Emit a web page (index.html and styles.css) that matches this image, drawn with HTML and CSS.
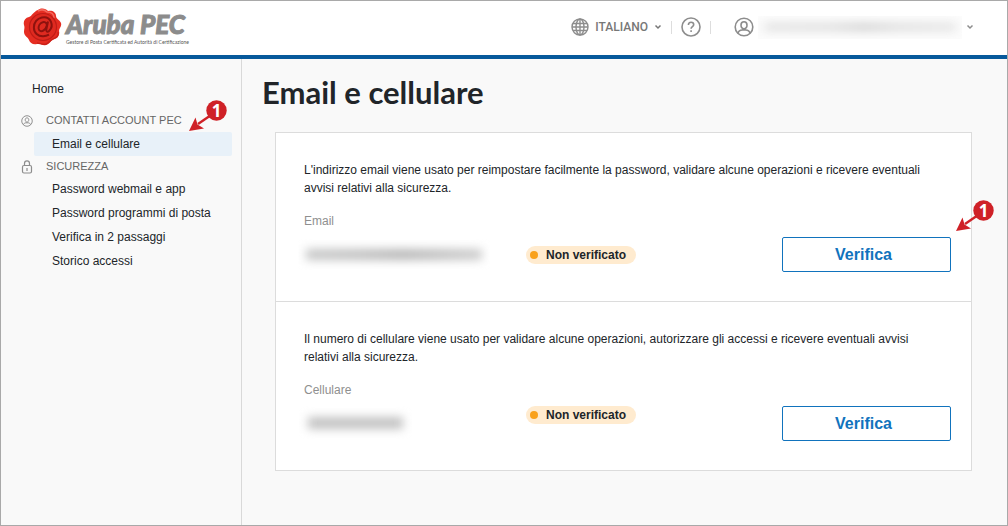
FILE: index.html
```html
<!DOCTYPE html>
<html lang="it">
<head>
<meta charset="utf-8">
<meta name="viewport" content="width=device-width, initial-scale=1">
<title>Aruba PEC - Email e cellulare</title>
<link rel="stylesheet" href="styles.css">
</head>
<body>
<svg class="defs" aria-hidden="true">
  <symbol id="chevron" viewBox="0 0 8 8"><path d="M1.500 2.500 4 5l2.500-2.500" fill="none" stroke="currentColor" stroke-width="1.500"/></symbol>
  <symbol id="user" viewBox="0 0 20 20"><g fill="none" stroke="currentColor" stroke-width="1.600"><circle cx="10" cy="10" r="8.800"/><path d="M10 4.800c1.900 0 3 1.400 3 3.300S11.800 11.700 10 11.700 7 10 7 8.100s1.100-3.300 3-3.300ZM4 16.300c.5-2.300 2.400-3.300 4.300-3.300h3.400c1.900 0 3.800 1 4.300 3.300"/></g></symbol>
  <symbol id="arrow" viewBox="0 0 38 32">
    <path d="M25 13 9 24" stroke="#cf2127" stroke-width="2.400" fill="none"/>
    <path d="M0 31 6.500 17.500l2 7 6.500 4Z" fill="#cf2127"/>
    <circle cx="27.500" cy="10.500" r="10.200" fill="#cf2127"/>
  </symbol>
</svg>
<div class="page">
  <header class="topbar">
    <a class="logo" href="#">
      <svg class="seal" viewBox="0 0 40 38" aria-hidden="true">
        <path d="M15 2c4-3 8-1 10 1 4-1 8 1 8 5 0 3 4 4 5 7 1 4-2 5-2 8 1 4-1 7-5 8-3 1-4 5-8 6-4 1-5-2-9-1-4 1-7-1-8-4-1-3-5-4-5-8 0-3 1-4 0-7-1-4 1-7 5-8C9 8 11 3 15 2Z" fill="#e52d22"/>
        <path d="M15 3c4-2 7-1 9 1 5 0 7 2 7 6" fill="none" stroke="#f4685c" stroke-width="1.500"/>
        <path d="M35 24c1 4-2 6-5 7-3 1-4 4-7 5-4 1-6-1-9-1" fill="none" stroke="#cb2119" stroke-width="1.500"/>
        <circle cx="20" cy="19" r="13.500" fill="#df2a20" stroke="#c01c16" stroke-width="1.200"/>
        <path d="M25 13.500 23.300 21.500c-.4 2.300 1.200 2.900 2.800 1.400 2.500-2.200 3.200-6 1.800-9.200-1.600-3.500-5.300-5-9.100-4.200-4.600 1-7.900 5-7.900 9.900 0 5.400 4 9 9.300 8.800 2.200 0 4-.6 5.800-1.600M24 17c-.5-2.300-2.200-3.400-4.300-2.700-3 .9-4.500 3.800-4 6.600.5 2.400 2.900 3 4.900 1.500 1.900-1.400 2.900-3.200 3.400-5.400Z" fill="none" stroke="#8e120e" stroke-width="2"/>
      </svg>
      <span class="brand"><span class="brand-name">Aruba PEC</span><span class="brand-tag">Gestore di Posta Certificata ed Autorità di Certificazione</span></span>
    </a>
    <nav class="tools" aria-label="Strumenti">
      <button class="tool lang" type="button">
        <svg class="globe" viewBox="0 0 18 18" aria-hidden="true"><g fill="none" stroke="currentColor" stroke-width="1.400"><circle cx="9" cy="9" r="8"/><ellipse cx="9" cy="9" rx="4" ry="8"/><path d="M9 1v16M2 5.500h14M1 9h16M2 12.500h14"/></g></svg>
        <span>ITALIANO</span>
        <svg class="chevron" aria-hidden="true"><use href="#chevron"/></svg>
      </button>
      <span class="rule"></span>
      <button class="tool" type="button" aria-label="Aiuto">
        <svg class="help" viewBox="0 0 20 20" aria-hidden="true"><g fill="none" stroke="currentColor" stroke-width="1.600"><circle cx="10" cy="10" r="9"/><path d="M7.400 8c0-1.700 1.100-2.700 2.700-2.700s2.600 1 2.600 2.400c0 1.900-2.600 2-2.600 4.100"/><path d="M10.100 13.200v1.700"/></g></svg>
      </button>
      <span class="rule"></span>
      <button class="tool account" type="button" aria-label="Account">
        <svg class="avatar" aria-hidden="true"><use href="#user"/></svg>
        <span class="veil veil-account"><span class="smudge"></span></span>
        <svg class="chevron" aria-hidden="true"><use href="#chevron"/></svg>
      </button>
    </nav>
  </header>
  <div class="body">
    <aside class="sidebar">
      <a class="home" href="#">Home</a>
      <section class="group">
        <h2 class="group-title"><svg class="group-icon" aria-hidden="true"><use href="#user"/></svg>CONTATTI ACCOUNT PEC</h2>
        <a class="item active" href="#" aria-current="page">Email e cellulare</a>
      </section>
      <section class="group">
        <h2 class="group-title"><svg class="group-icon" viewBox="0 0 12 14" aria-hidden="true"><g fill="none" stroke="currentColor" stroke-width="1.200"><rect x="1.500" y="5.500" width="9" height="7.500" rx="1.500"/><path d="M3.500 5.500V3.400a2.500 2.500 0 0 1 5 0v2.100M6 8v3"/></g></svg>SICUREZZA</h2>
        <a class="item" href="#">Password webmail e app</a>
        <a class="item" href="#">Password programmi di posta</a>
        <a class="item" href="#">Verifica in 2 passaggi</a>
        <a class="item" href="#">Storico accessi</a>
      </section>
      <span class="callout callout-side"><svg aria-hidden="true"><use href="#arrow"/></svg><b>1</b></span>
    </aside>
    <main class="main">
      <h1 class="title">Email e cellulare</h1>
      <div class="card">
        <section class="contact">
          <p class="text">L'indirizzo email viene usato per reimpostare facilmente la password, validare alcune operazioni e ricevere eventuali avvisi relativi alla sicurezza.</p>
          <h3 class="label">Email</h3>
          <div class="row">
            <span class="veil veil-email"><span class="smudge"></span></span>
            <span class="badge">Non verificato</span>
            <button class="verify" type="button">Verifica</button>
          </div>
        </section>
        <section class="contact">
          <p class="text">Il numero di cellulare viene usato per validare alcune operazioni, autorizzare gli accessi e ricevere eventuali avvisi relativi alla sicurezza.</p>
          <h3 class="label">Cellulare</h3>
          <div class="row row-top">
            <span class="veil veil-phone"><span class="smudge"></span></span>
            <span class="badge">Non verificato</span>
            <button class="verify" type="button">Verifica</button>
          </div>
        </section>
        <span class="callout callout-card"><svg aria-hidden="true"><use href="#arrow"/></svg><b>1</b></span>
      </div>
    </main>
  </div>
</div>
</body>
</html>
```
FILE: styles.css
```css
* { box-sizing: border-box; }
body {
  margin: 0;
  font: 12px/18px "Liberation Sans", Arial, sans-serif;
  color: #212529;
  background: #f9f9f9;
}
a { color: inherit; text-decoration: none; }
h1, h2, h3, p { margin: 0; font-weight: 400; }
button { font-family: inherit; cursor: pointer; }
.defs { position: absolute; width: 0; height: 0; }
.page {
  min-height: 100vh;
  display: flex;
  flex-direction: column;
  border: 1px solid #a9a9a9;
}

/* Header */
.topbar {
  display: flex;
  justify-content: space-between;
  align-items: center;
  height: 58px;
  padding: 0 33px 2px 22px;
  background: #fff;
  border-bottom: 4px solid #06599b;
}
.logo { display: flex; align-items: center; gap: 3px; }
.seal { width: 40px; height: 38px; }
.brand { display: flex; flex-direction: column; color: #8c8c8c; }
.brand-name { font: italic 900 26px/30px Lato, sans-serif; -webkit-text-stroke: 1px #8c8c8c; }
.brand-tag { font: 5px/7px Lato, sans-serif; color: #555; }
.tools { display: flex; align-items: center; gap: 9px; color: #8d8d8d; }
.tool {
  display: flex;
  align-items: center;
  padding: 0;
  border: 0;
  background: none;
  color: inherit;
}
.lang { gap: 6px; font: 500 12px/18px Roboto, sans-serif; color: #777; }
.globe { width: 18px; height: 18px; color: #8d8d8d; }
.help { width: 20px; height: 20px; }
.avatar { width: 20px; height: 20px; }
.chevron { width: 8px; height: 8px; }
.rule { width: 1px; height: 13px; background: #ddd; }
.account { gap: 4px; margin-left: 14px; }

/* Redacted values */
.veil { display: flex; align-items: center; overflow: hidden; }
.smudge { flex: 1; height: 8px; filter: blur(5px); }
.veil-account { width: 204px; height: 23px; padding: 0 6px; background: #fcfcfc; }
.veil-account .smudge { background: linear-gradient(90deg, #e2e2e2, #dedede 35%, #d2d2d2 52%, #dedede 70%, #e4e4e4); }
.veil-email { width: 192px; height: 31px; margin-left: -6px; padding: 0 8px; }
.veil-email .smudge { height: 11px; background: linear-gradient(90deg, #c6c7c7, #c0c0c0 30%, #b6b6b6 55%, #ccc); }
.veil-phone { width: 115px; height: 33px; margin-left: -6px; padding: 0 10px; }
.veil-phone .smudge { height: 12px; background: #c2c2c2; }

/* Sidebar */
.body { display: flex; flex: 1; }
.sidebar {
  position: relative;
  flex: 0 0 241px;
  padding: 21px 9px 0 20px;
  border-right: 1px solid #d9d9d9;
}
.home { display: block; margin-left: 11px; }
.group { display: flex; flex-direction: column; }
.home + .group { margin-top: 12px; }
.group-title {
  display: flex;
  gap: 13px;
  height: 22px;
  font-size: 11px;
  line-height: 20px;
  color: #666;
}
.group + .group .group-title { height: 21px; }
.group-icon { width: 12px; height: 14px; margin-top: 4px; color: #8d8d8d; }
.item {
  margin-left: 13px;
  padding: 3px 18px;
  border-radius: 2px;
}
.active { background: #e8f1f9; }

/* Content */
.main { flex: 1; padding: 13px 35px 54px 20px; }
.title { font: 700 31px/40px Lato, sans-serif; }
.card {
  position: relative;
  margin: 20px 0 0 13px;
  background: #fff;
  border: 1px solid #dcdcdc;
}
.contact { padding: 28px 20px 29px 28px; }
.contact + .contact { border-top: 1px solid #dcdcdc; }
.text { padding-right: 14px; }
.label { margin-top: 15px; font-size: 12px; color: #8f8f8f; }
.row {
  display: grid;
  grid-template-columns: 222px 1fr 169px;
  align-items: center;
  margin-top: 7px;
}
.row-top { align-items: start; }
.badge {
  justify-self: start;
  display: flex;
  align-items: center;
  gap: 8px;
  padding: 0 10px 0 4px;
  border-radius: 9px;
  background: #ffebcf;
  font-weight: 700;
}
.badge::before {
  content: "";
  width: 8px;
  height: 8px;
  border-radius: 50%;
  background: #f9a11b;
}
.verify {
  height: 35px;
  padding: 0 6px 0 0;
  border: 1px solid #1173bd;
  border-radius: 2px;
  background: #fff;
  color: #1173bd;
  font-size: 16px;
  font-weight: 700;
}

/* Step callouts lying over the page */
.callout { position: absolute; width: 38px; height: 32px; }
.callout svg { width: 38px; height: 32px; }
.callout b {
  position: absolute;
  left: 17px;
  top: 0;
  width: 21px;
  color: #fff;
  font: 700 17px/21px "Open Sans", sans-serif;
  text-align: center;
}
.callout-side { left: 188px; top: 41px; }
.callout-card { right: -23px; top: 67px; }
```
